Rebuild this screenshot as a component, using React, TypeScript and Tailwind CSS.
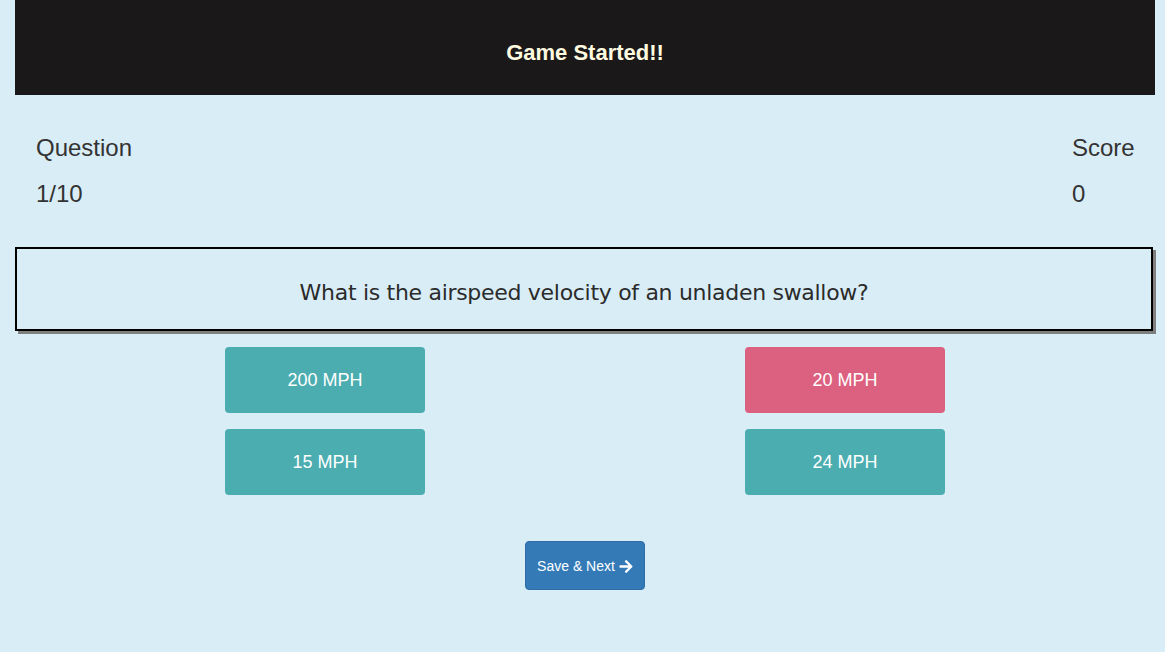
export default function App() {
    const answers = [
        { label: "200 MPH", picked: false },
        { label: "20 MPH", picked: true },
        { label: "15 MPH", picked: false },
        { label: "24 MPH", picked: false },
    ];

    return (
        <div className="min-h-[652px] w-full bg-[#d9edf7] pl-[15px] pr-[10px] pb-10 font-['Liberation_Sans',Arial,sans-serif] text-[#333]">
            <div className="h-[95px] bg-[#1a1818] flex items-center justify-center pt-[10px]">
                <h1 className="text-[22px] font-bold text-[#fffbe0]">Game Started!!</h1>
            </div>

            <div className="flex justify-between px-[21px] pt-[39px]">
                <div className="flex flex-col gap-[18px] text-[24px] leading-[28px]">
                    <p>Question</p>
                    <p>1/10</p>
                </div>
                <div className="flex flex-col gap-[18px] text-[24px] leading-[28px] w-[62px]">
                    <p>Score</p>
                    <p>0</p>
                </div>
            </div>

            <div className="mt-[39px] mr-[2px] h-[84px] border-2 border-black shadow-[3px_3px_0_#7f7f7f] flex items-center justify-center">
                <h2 className="text-[22px] text-[#2b2b2b] font-['DejaVu_Sans',sans-serif] tracking-[-0.3px] pt-[6px]">
                    What is the airspeed velocity of an unladen swallow?
                </h2>
            </div>

            <div className="mx-auto mt-[16px] w-[1040px] grid grid-cols-2 gap-y-[16px]">
                {answers.map((a) => (
                    <div key={a.label} className="flex justify-center">
                        <button
                            className={
                                "w-[200px] h-[66px] rounded-[4px] text-white text-[18px] " +
                                (a.picked ? "bg-[#dc6180]" : "bg-[#4badb0]")
                            }
                        >
                            {a.label}
                        </button>
                    </div>
                ))}
            </div>

            <div className="flex justify-center mt-[46px]">
                <button className="w-[120px] h-[49px] rounded-[4px] bg-[#337ab7] border border-[#2e6da4] text-white text-[14px] flex items-center justify-center gap-[4px] pt-[2px]">
                    Save &amp; Next
                    <svg width="14" height="15" viewBox="0 0 448 512" fill="currentColor">
                        <path d="M190.5 66.9l22.2-22.2c9.4-9.4 24.6-9.4 33.9 0L441 239c9.4 9.4 9.4 24.6 0 33.9L246.6 467.3c-9.4 9.4-24.6 9.4-33.9 0l-22.2-22.2c-9.5-9.5-9.3-25 .4-34.3L311.4 296H24c-13.3 0-24-10.7-24-24v-32c0-13.3 10.7-24 24-24h287.4L190.9 101.2c-9.8-9.3-10-24.8-.4-34.3z" />
                    </svg>
                </button>
            </div>
        </div>
    );
}
